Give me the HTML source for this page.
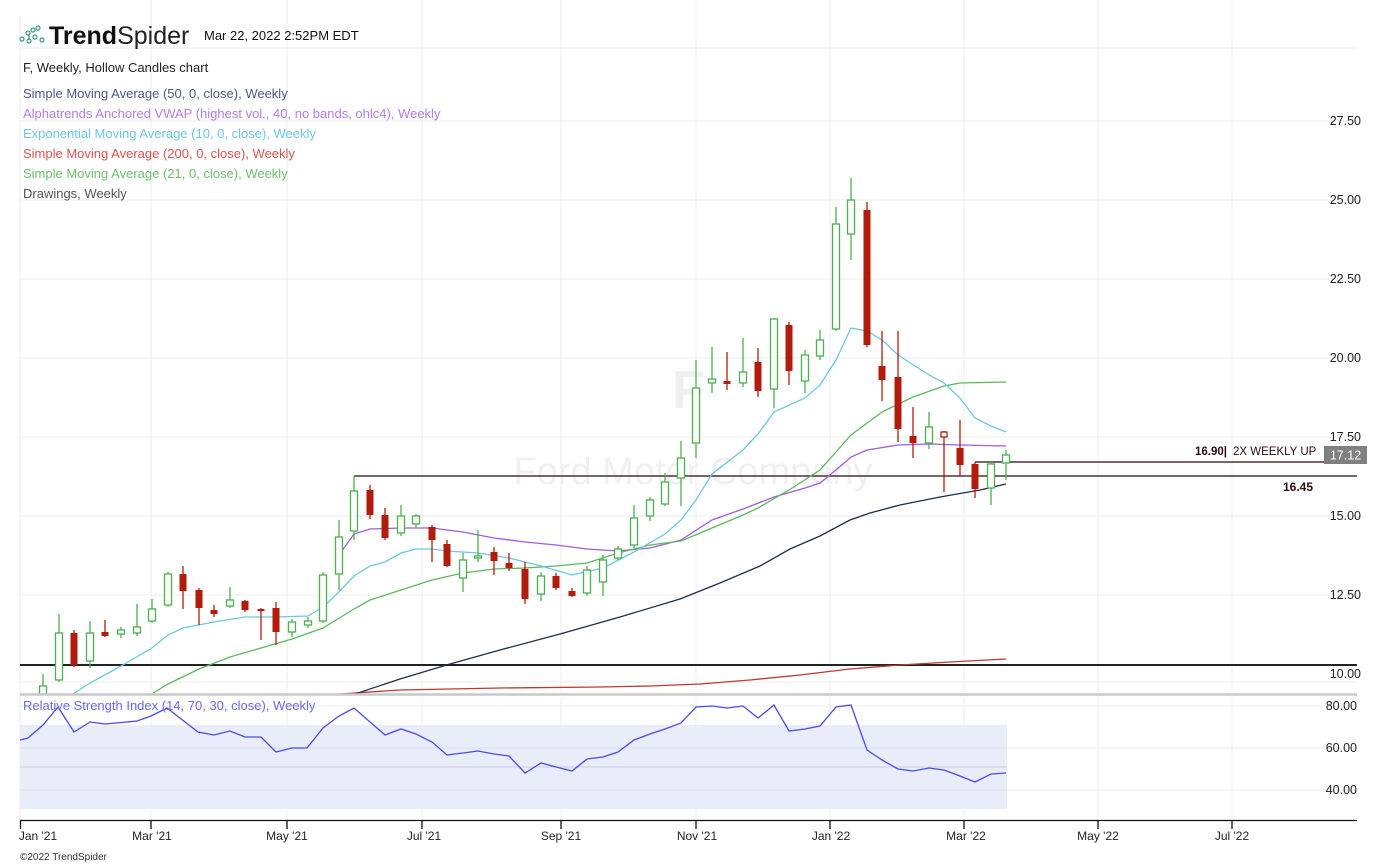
<!DOCTYPE html>
<html><head><meta charset="utf-8"><style>
body{margin:0;background:#fff;width:1387px;height:866px;overflow:hidden;font-family:"Liberation Sans",sans-serif}
svg{position:absolute;left:0;top:0}
.g{fill:#fff;stroke:#4caf50;stroke-width:1.3}
.gw{stroke:#4caf50;stroke-width:1.3}
.r{fill:#b21c0c}
.rw{stroke:#b21c0c;stroke-width:1.3}
text{font-family:"Liberation Sans",sans-serif}
</style></head><body>
<svg width="1387" height="866" viewBox="0 0 1387 866">
<!-- grid -->
<g stroke="#ececec" stroke-width="1">
<line x1="151" y1="0" x2="151" y2="694"/><line x1="287" y1="0" x2="287" y2="694"/><line x1="422" y1="0" x2="422" y2="694"/><line x1="561" y1="0" x2="561" y2="694"/><line x1="696" y1="0" x2="696" y2="694"/><line x1="830" y1="0" x2="830" y2="694"/><line x1="964" y1="0" x2="964" y2="694"/><line x1="1098" y1="0" x2="1098" y2="694"/><line x1="1232" y1="0" x2="1232" y2="694"/>
<line x1="20" y1="48" x2="1357" y2="48"/>
<line x1="20" y1="121" x2="1357" y2="121"/><line x1="20" y1="200" x2="1357" y2="200"/><line x1="20" y1="279" x2="1357" y2="279"/><line x1="20" y1="358" x2="1357" y2="358"/><line x1="20" y1="437" x2="1357" y2="437"/><line x1="20" y1="516" x2="1357" y2="516"/><line x1="20" y1="595" x2="1357" y2="595"/><line x1="20" y1="682" x2="1357" y2="682"/>
<line x1="20" y1="16" x2="20" y2="820"/>
<line x1="151" y1="697" x2="151" y2="820"/><line x1="287" y1="697" x2="287" y2="820"/><line x1="422" y1="697" x2="422" y2="820"/><line x1="561" y1="697" x2="561" y2="820"/><line x1="696" y1="697" x2="696" y2="820"/><line x1="830" y1="697" x2="830" y2="820"/><line x1="964" y1="697" x2="964" y2="820"/><line x1="1098" y1="697" x2="1098" y2="820"/><line x1="1232" y1="697" x2="1232" y2="820"/>
<line x1="20" y1="706" x2="1357" y2="706"/><line x1="20" y1="748" x2="1357" y2="748"/><line x1="20" y1="790" x2="1357" y2="790"/>
</g>
<!-- watermark -->
<text x="672" y="408" font-size="54" font-weight="bold" fill="#efefef">F</text>
<text x="693" y="484" font-size="38" fill="#f0f0f0" text-anchor="middle">Ford Motor Company</text>
<!-- horizontal lines -->
<line x1="20" y1="665" x2="1357" y2="665" stroke="#222" stroke-width="2"/>
<line x1="354" y1="476" x2="1357" y2="476" stroke="#2a0a0a" stroke-width="1.2"/>
<line x1="975" y1="462" x2="1325" y2="462" stroke="#2a0a0a" stroke-width="1.2"/>
<!-- MAs -->
<polyline fill="none" stroke="#c0392b" stroke-width="1.3" points="340,694 400,690 500,688 600,687 650,686 700,684 750,680 800,675 850,669 900,665 950,662 1006,659"/>
<polyline fill="none" stroke="#1f2d4d" stroke-width="1.3" points="355,694 400,679 450,664 500,650 560,634 620,617 680,599 720,583 760,566 790,549 820,536 850,520 870,513 900,505 940,497 980,490 1006,484"/>
<polyline fill="none" stroke="#a05ce0" stroke-width="1.3" points="339,555 354,534 370,529 401,528 432,528 463,532 494,538 525,542 556,545 587,549 618,551 650,548 681,540 712,520 743,509 774,497 805,488 820,483 836,470 851,457 867,450 898,445 929,444 960,445 1006,446"/>
<polyline fill="none" stroke="#5cb85c" stroke-width="1.3" points="150,695 168,684 199,669 230,657 261,648 292,639 323,628 354,609 370,600 401,590 432,580 463,573 494,569 525,568 556,566 587,563 618,553 650,545 681,541 712,528 743,515 758,508 789,490 820,470 851,435 882,412 913,397 944,386 960,383 1006,382"/>
<polyline fill="none" stroke="#6cc7e3" stroke-width="1.3" points="73,694 90,683 121,666 152,648 168,635 183,628 214,622 245,617 276,617 308,616 323,607 339,592 354,576 370,566 385,562 401,553 416,549 432,549 447,551 478,553 509,558 541,566 572,575 603,568 634,552 665,534 681,520 696,500 712,474 743,450 758,434 774,412 805,398 820,385 836,360 851,328 867,331 882,340 898,355 929,375 944,383 960,398 975,418 991,426 1006,432"/>
<!-- candles -->
<g>
<line class="gw" x1="43" y1="674" x2="43" y2="694"/><rect class="g" x="39.5" y="686" width="7" height="8"/>
<line class="gw" x1="59" y1="614" x2="59" y2="682"/><rect class="g" x="55.5" y="633" width="7" height="47"/>
<line class="rw" x1="74" y1="630" x2="74" y2="667"/><rect class="r" x="70.5" y="633" width="7" height="32"/>
<line class="gw" x1="90" y1="621" x2="90" y2="668"/><rect class="g" x="86.5" y="633" width="7" height="28"/>
<line class="rw" x1="105" y1="620" x2="105" y2="637"/><rect class="r" x="101.5" y="632" width="7" height="4"/>
<line class="gw" x1="121" y1="627" x2="121" y2="638"/><rect class="g" x="117.5" y="630" width="7" height="4"/>
<line class="gw" x1="137" y1="604" x2="137" y2="636"/><rect class="g" x="133.5" y="627" width="7" height="6"/>
<line class="gw" x1="152" y1="599" x2="152" y2="623"/><rect class="g" x="148.5" y="609" width="7" height="12"/>
<line class="gw" x1="168" y1="572" x2="168" y2="607"/><rect class="g" x="164.5" y="574" width="7" height="31"/>
<line class="rw" x1="183" y1="566" x2="183" y2="609"/><rect class="r" x="179.5" y="574" width="7" height="17"/>
<line class="rw" x1="199" y1="588" x2="199" y2="625"/><rect class="r" x="195.5" y="590" width="7" height="18"/>
<line class="rw" x1="214" y1="605" x2="214" y2="617"/><rect class="r" x="210.5" y="610" width="7" height="4"/>
<line class="gw" x1="230" y1="587" x2="230" y2="608"/><rect class="g" x="226.5" y="600" width="7" height="6"/>
<line class="rw" x1="245" y1="600" x2="245" y2="612"/><rect class="r" x="241.5" y="601" width="7" height="9"/>
<line class="rw" x1="261" y1="608" x2="261" y2="640"/><rect class="r" x="257.5" y="609" width="7" height="2"/>
<line class="rw" x1="276" y1="602" x2="276" y2="645"/><rect class="r" x="272.5" y="608" width="7" height="24"/>
<line class="gw" x1="292" y1="619" x2="292" y2="637"/><rect class="g" x="288.5" y="622" width="7" height="10"/>
<line class="gw" x1="308" y1="617" x2="308" y2="628"/><rect class="g" x="304.5" y="621" width="7" height="4"/>
<line class="gw" x1="323" y1="572" x2="323" y2="623"/><rect class="g" x="319.5" y="575" width="7" height="46"/>
<line class="gw" x1="339" y1="520" x2="339" y2="590"/><rect class="g" x="335.5" y="537" width="7" height="37"/>
<line class="gw" x1="354" y1="476" x2="354" y2="540"/><rect class="g" x="350.5" y="491" width="7" height="40"/>
<line class="rw" x1="370" y1="485" x2="370" y2="519"/><rect class="r" x="366.5" y="490" width="7" height="25"/>
<line class="rw" x1="385" y1="508" x2="385" y2="540"/><rect class="r" x="381.5" y="515" width="7" height="23"/>
<line class="gw" x1="401" y1="505" x2="401" y2="536"/><rect class="g" x="397.5" y="516" width="7" height="17"/>
<line class="gw" x1="416" y1="514" x2="416" y2="528"/><rect class="g" x="412.5" y="516" width="7" height="8"/>
<line class="rw" x1="432" y1="525" x2="432" y2="562"/><rect class="r" x="428.5" y="527" width="7" height="13"/>
<line class="rw" x1="447" y1="540" x2="447" y2="567"/><rect class="r" x="443.5" y="544" width="7" height="22"/>
<line class="gw" x1="463" y1="553" x2="463" y2="592"/><rect class="g" x="459.5" y="560" width="7" height="18"/>
<line class="gw" x1="478" y1="530" x2="478" y2="562"/><rect class="g" x="474.5" y="556" width="7" height="2"/>
<line class="rw" x1="494" y1="547" x2="494" y2="575"/><rect class="r" x="490.5" y="552" width="7" height="9"/>
<line class="rw" x1="509" y1="553" x2="509" y2="571"/><rect class="r" x="505.5" y="563" width="7" height="5"/>
<line class="rw" x1="525" y1="562" x2="525" y2="604"/><rect class="r" x="521.5" y="569" width="7" height="30"/>
<line class="gw" x1="541" y1="572" x2="541" y2="601"/><rect class="g" x="537.5" y="576" width="7" height="18"/>
<line class="rw" x1="556" y1="573" x2="556" y2="590"/><rect class="r" x="552.5" y="576" width="7" height="12"/>
<line class="rw" x1="572" y1="588" x2="572" y2="597"/><rect class="r" x="568.5" y="591" width="7" height="5"/>
<line class="gw" x1="587" y1="566" x2="587" y2="596"/><rect class="g" x="583.5" y="570" width="7" height="23"/>
<line class="gw" x1="603" y1="555" x2="603" y2="596"/><rect class="g" x="599.5" y="560" width="7" height="22"/>
<line class="gw" x1="618" y1="546" x2="618" y2="560"/><rect class="g" x="614.5" y="549" width="7" height="9"/>
<line class="gw" x1="634" y1="505" x2="634" y2="548"/><rect class="g" x="630.5" y="518" width="7" height="27"/>
<line class="gw" x1="650" y1="497" x2="650" y2="521"/><rect class="g" x="646.5" y="500" width="7" height="16"/>
<line class="gw" x1="665" y1="473" x2="665" y2="506"/><rect class="g" x="661.5" y="482" width="7" height="22"/>
<line class="gw" x1="681" y1="441" x2="681" y2="506"/><rect class="g" x="677.5" y="458" width="7" height="20"/>
<line class="gw" x1="696" y1="360" x2="696" y2="458"/><rect class="g" x="692.5" y="388" width="7" height="55"/>
<line class="gw" x1="712" y1="347" x2="712" y2="393"/><rect class="g" x="708.5" y="379" width="7" height="4"/>
<line class="rw" x1="727" y1="352" x2="727" y2="390"/><rect class="r" x="723.5" y="381" width="7" height="3"/>
<line class="gw" x1="743" y1="338" x2="743" y2="387"/><rect class="g" x="739.5" y="372" width="7" height="11"/>
<line class="rw" x1="758" y1="348" x2="758" y2="397"/><rect class="r" x="754.5" y="362" width="7" height="29"/>
<line class="gw" x1="774" y1="318" x2="774" y2="408"/><rect class="g" x="770.5" y="319" width="7" height="70"/>
<line class="rw" x1="789" y1="322" x2="789" y2="385"/><rect class="r" x="785.5" y="325" width="7" height="46"/>
<line class="gw" x1="805" y1="350" x2="805" y2="393"/><rect class="g" x="801.5" y="355" width="7" height="26"/>
<line class="gw" x1="820" y1="330" x2="820" y2="360"/><rect class="g" x="816.5" y="340" width="7" height="16"/>
<line class="gw" x1="836" y1="207" x2="836" y2="331"/><rect class="g" x="832.5" y="224" width="7" height="105"/>
<line class="gw" x1="851" y1="178" x2="851" y2="260"/><rect class="g" x="847.5" y="200" width="7" height="34"/>
<line class="rw" x1="867" y1="202" x2="867" y2="347"/><rect class="r" x="863.5" y="210" width="7" height="135"/>
<line class="rw" x1="882" y1="331" x2="882" y2="401"/><rect class="r" x="878.5" y="366" width="7" height="14"/>
<line class="rw" x1="898" y1="331" x2="898" y2="442"/><rect class="r" x="894.5" y="377" width="7" height="52"/>
<line class="rw" x1="913" y1="407" x2="913" y2="458"/><rect class="r" x="909.5" y="436" width="7" height="7"/>
<line class="gw" x1="929" y1="412" x2="929" y2="449"/><rect class="g" x="925.5" y="427" width="7" height="16"/>
<line class="rw" x1="944" y1="431" x2="944" y2="492"/><rect x="941" y="432" width="6" height="5" fill="#fff" stroke="#b21c0c" stroke-width="1.3"/>
<line class="rw" x1="960" y1="420" x2="960" y2="476"/><rect class="r" x="956.5" y="448" width="7" height="17"/>
<line class="rw" x1="975" y1="462" x2="975" y2="498"/><rect class="r" x="971.5" y="464" width="7" height="25"/>
<line class="gw" x1="991" y1="462" x2="991" y2="505"/><rect class="g" x="987.5" y="464" width="7" height="24"/>
<line class="gw" x1="1006" y1="450" x2="1006" y2="480"/><rect class="g" x="1002.5" y="455" width="7" height="8"/>
</g>
<!-- panel separator -->
<line x1="20" y1="694.5" x2="1357" y2="694.5" stroke="#c8c8c8" stroke-width="2.5"/>
<!-- RSI -->
<rect x="20" y="725" width="987" height="84" fill="#e9ecf9"/>
<line x1="20" y1="767" x2="1007" y2="767" stroke="#cfcbe6" stroke-width="1"/>
<line x1="20" y1="748" x2="1007" y2="748" stroke="#dcdff0" stroke-width="1"/>
<line x1="20" y1="790" x2="1007" y2="790" stroke="#dcdff0" stroke-width="1"/>
<polyline fill="none" stroke="#4a4aef" stroke-width="1.3" points="20,740 28,738 43,725 58,707 74,732 90,722 105,724 137,721 151,716 167,708 198,732 214,735 230,731 245,737 261,737 276,752 292,748 307,748 323,728 339,716 354,708 370,722 385,735 401,729 416,734 432,742 447,755 463,753 478,751 494,754 509,756 525,773 541,763 556,767 572,771 587,759 603,757 618,752 634,740 650,734 665,729 681,723 696,707 712,706 727,708 743,706 758,718 774,705 789,731 805,729 820,726 836,707 851,705 867,750 882,760 898,769 913,771 929,768 944,770 960,776 975,782 991,774 1006,773"/>
<text x="23" y="710" font-size="13" fill="#6a6af0">Relative Strength Index (14, 70, 30, close), Weekly</text>
<!-- x axis -->
<line x1="20" y1="820.5" x2="1357" y2="820.5" stroke="#111" stroke-width="1.3"/>
<g stroke="#111" stroke-width="1.3">
<line x1="20.5" y1="820" x2="20.5" y2="829"/><line x1="151" y1="820" x2="151" y2="829"/><line x1="287" y1="820" x2="287" y2="829"/><line x1="422" y1="820" x2="422" y2="829"/><line x1="561" y1="820" x2="561" y2="829"/><line x1="696" y1="820" x2="696" y2="829"/><line x1="830" y1="820" x2="830" y2="829"/><line x1="964" y1="820" x2="964" y2="829"/><line x1="1098" y1="820" x2="1098" y2="829"/><line x1="1232" y1="820" x2="1232" y2="829"/>
</g>
<g font-size="12" fill="#222" text-anchor="middle">
<text x="38" y="840">Jan '21</text><text x="152" y="840">Mar '21</text><text x="287" y="840">May '21</text><text x="424" y="840">Jul '21</text><text x="561" y="840">Sep '21</text><text x="697" y="840">Nov '21</text><text x="831" y="840">Jan '22</text><text x="966" y="840">Mar '22</text><text x="1098" y="840">May '22</text><text x="1232" y="840">Jul '22</text>
</g>
<text x="20" y="860" font-size="10" fill="#333">©2022 TrendSpider</text>
<!-- y axis labels -->
<g font-size="12.5" fill="#222" text-anchor="end">
<text x="1361" y="125">27.50</text><text x="1361" y="204">25.00</text><text x="1361" y="283">22.50</text><text x="1361" y="362">20.00</text><text x="1361" y="441">17.50</text><text x="1361" y="520">15.00</text><text x="1361" y="599">12.50</text><text x="1361" y="678">10.00</text>
<text x="1357" y="710">80.00</text><text x="1357" y="752">60.00</text><text x="1357" y="794">40.00</text>
</g>
<rect x="1324" y="446" width="43" height="18" fill="#808080"/>
<text x="1345.5" y="459.5" font-size="12.5" fill="#fff" text-anchor="middle">17.12</text>
<text x="1227" y="455" font-size="11.5" fill="#2a0a0a" text-anchor="end" font-weight="bold">16.90|</text>
<text x="1233" y="455" font-size="11.5" fill="#2a0a0a">2X WEEKLY UP</text>
<text x="1313" y="491" font-size="12" fill="#2a0a0a" text-anchor="end" font-weight="bold">16.45</text>
<!-- header -->
<g fill="none" stroke="#3a9a82" stroke-width="1.2">
<circle cx="22" cy="39" r="2"/><circle cx="28" cy="33" r="2"/><circle cx="33" cy="30" r="2"/><circle cx="38" cy="28" r="2"/><circle cx="29" cy="41" r="2"/><circle cx="35" cy="37" r="2"/><circle cx="42" cy="40" r="2"/><line x1="29" y1="34" x2="29" y2="40"/>
</g>
<text x="49" y="44" font-size="25" fill="#111"><tspan font-weight="bold">Trend</tspan><tspan font-weight="normal" fill="#222">Spider</tspan></text>
<text x="204" y="40" font-size="13" fill="#111">Mar 22, 2022 2:52PM EDT</text>
<g font-size="13">
<text x="23" y="72" fill="#222">F, Weekly, Hollow Candles chart</text>
<text x="23" y="98" fill="#4b5a7d">Simple Moving Average (50, 0, close), Weekly</text>
<text x="23" y="118" fill="#b57ce8">Alphatrends Anchored VWAP (highest vol., 40, no bands, ohlc4), Weekly</text>
<text x="23" y="138" fill="#6cc7e3">Exponential Moving Average (10, 0, close), Weekly</text>
<text x="23" y="158" fill="#d9534f">Simple Moving Average (200, 0, close), Weekly</text>
<text x="23" y="178" fill="#6cc06c">Simple Moving Average (21, 0, close), Weekly</text>
<text x="23" y="198" fill="#555">Drawings, Weekly</text>
</g>
</svg>
</body></html>
